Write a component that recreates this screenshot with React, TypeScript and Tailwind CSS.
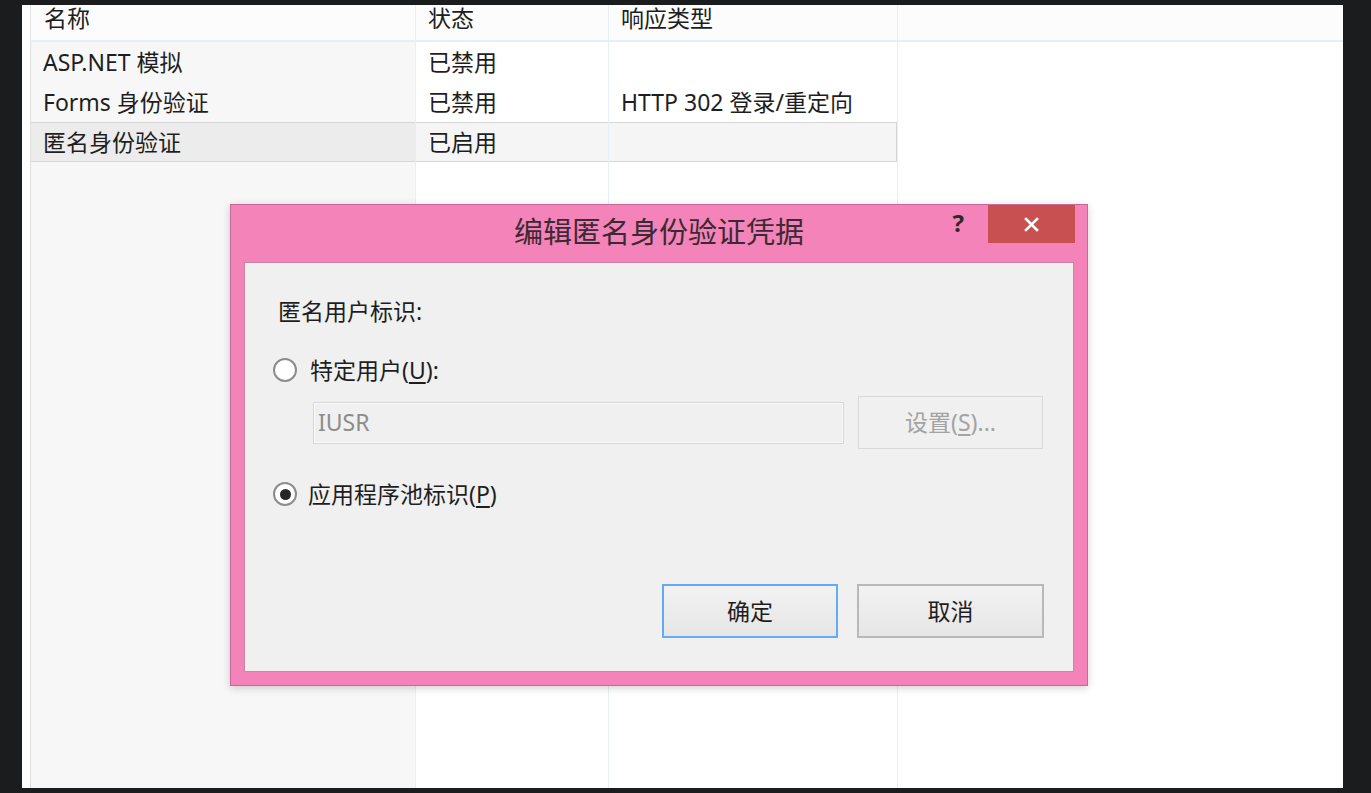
import type { ReactNode } from "react";

const FONT = { fontFamily: '"Noto Sans", "Noto Sans CJK SC", sans-serif' };

const ROWS = [
	{ name: "ASP.NET 模拟", status: "已禁用", type: "" },
	{ name: "Forms 身份验证", status: "已禁用", type: "HTTP 302 登录/重定向" },
	{ name: "匿名身份验证", status: "已启用", type: "", selected: true },
];

function Radio({ checked }: { checked?: boolean }): ReactNode {
	return (
		<span className="w-[24px] h-[24px] rounded-full border-2 border-[#8c8c8c] bg-white flex items-center justify-center flex-none">
			{checked && <span className="w-[11px] h-[11px] rounded-full bg-[#262626]" />}
		</span>
	);
}

function Table(): ReactNode {
	return (
		<div className="flex flex-col h-full pl-2 bg-white">
			{/* header */}
			<div className="flex h-[37px] bg-[#fcfcfc] border-b-2 border-[#e6eef8] text-[#1e1e1e]">
				<div className="w-[386px] border-l border-[#e4e4e4] border-r border-r-[#e6eef8] pl-[13px] leading-[26px]">名称</div>
				<div className="w-[193px] border-r border-[#e6eef8] pl-[12px] leading-[26px]">状态</div>
				<div className="w-[289px] border-r border-[#e6eef8] pl-[12px] leading-[26px]">响应类型</div>
				<div className="flex-1" />
			</div>
			{/* body */}
			<div className="flex flex-1">
				<div className="w-[386px] bg-[#f7f7f7] border-l border-[#dedede] border-r border-r-[#e6eef8]">
					{ROWS.map((r, i) => (
						<div
							key={i}
							className={`h-[40px] flex items-center pl-[12px] ${
								r.selected ? "bg-[#ececec] border-y border-[#d6d6d6]" : ""
							}`}
						>
							{r.name}
						</div>
					))}
				</div>
				<div className="w-[193px] border-r border-[#e6eef8]">
					{ROWS.map((r, i) => (
						<div
							key={i}
							className={`h-[40px] flex items-center pl-[12px] ${
								r.selected ? "bg-[#f5f5f5] border-y border-[#d6d6d6]" : ""
							}`}
						>
							{r.status}
						</div>
					))}
				</div>
				<div className="w-[289px] border-r border-[#e6eef8]">
					{ROWS.map((r, i) => (
						<div
							key={i}
							className={`h-[40px] flex items-center pl-[12px] ${
								r.selected ? "bg-[#f5f5f5] border-y border-r border-[#d6d6d6]" : ""
							}`}
						>
							{r.type}
						</div>
					))}
				</div>
				<div className="flex-1" />
			</div>
		</div>
	);
}

function Dialog(): ReactNode {
	return (
		<div className="absolute left-[230px] top-[204px] w-[858px] border border-[#c8679a] bg-[#f383b9] px-[13px] pb-[13px] shadow-[0_2px_8px_rgba(0,0,0,0.18)]">
			{/* title bar */}
			<div className="relative h-[57px] flex items-center justify-center">
				<span className="text-[29px] text-[#3b2a33] leading-none pb-[4px]">编辑匿名身份验证凭据</span>
				<span className="absolute right-[110px] top-[6px] text-[24px] font-bold text-[#2a2a2a] leading-none">?</span>
				<div className="absolute right-[-1px] top-0 w-[87px] h-[38px] bg-[#c85050] flex items-center justify-center">
					<svg width="15" height="15" viewBox="0 0 15 15">
						<path d="M2 2 L13 13 M13 2 L2 13" stroke="white" strokeWidth="2.6" strokeLinecap="square" />
					</svg>
				</div>
			</div>
			{/* content */}
			<div className="border border-[#c9869f] bg-[#f0f0f0] text-[#1e1e1e] pt-[33px] pb-[33px] pr-[29px]">
				<div className="pl-[33px] leading-[30px]">匿名用户标识:</div>
				<div className="mt-[29px] pl-[28px] flex items-center gap-[13px] h-[30px]">
					<Radio />
					<span>
						特定用户(<span className="underline underline-offset-[3px]">U</span>):
					</span>
				</div>
				<div className="mt-[11px] pl-[68px] flex items-center gap-[14px]">
					<div className="w-[531px] h-[42px] border border-[#d6d6d6] bg-[#f0f0f0] shadow-[inset_0_0_0_1px_#fbfbfb] flex items-center pl-[4px] text-[#8c8c8c]">
						IUSR
					</div>
					<div className="w-[185px] h-[53px] border border-[#d9d9d9] bg-[#f0f0f0] flex items-center justify-center text-[#a3a3a3]">
						<span>
							设置(<span className="underline underline-offset-[3px]">S</span>)...
						</span>
					</div>
				</div>
				<div className="mt-[30px] pl-[28px] flex items-center gap-[11px] h-[30px]">
					<Radio checked />
					<span>
						应用程序池标识(<span className="underline underline-offset-[3px]">P</span>)
					</span>
				</div>
				<div className="mt-[75px] flex justify-end gap-[19px]">
					<div className="w-[176px] h-[54px] border-2 border-[#63abf2] bg-gradient-to-b from-[#f2f2f2] to-[#e6e6e6] flex items-center justify-center">
						确定
					</div>
					<div className="w-[187px] h-[54px] border-2 border-[#b8b8b8] bg-gradient-to-b from-[#f2f2f2] to-[#e6e6e6] flex items-center justify-center">
						取消
					</div>
				</div>
			</div>
		</div>
	);
}

export default function App(): ReactNode {
	return (
		<div className="w-[1371px] h-[793px] bg-[#1b1c1e] pt-[5px] pl-[22px] pr-[28px] pb-[5px] overflow-hidden" style={FONT}>
			<div className="relative h-full text-[23px] text-[#1e1e1e]">
				<Table />
				<div className="absolute left-[-22px] top-[-5px]">
					<Dialog />
				</div>
			</div>
		</div>
	);
}
